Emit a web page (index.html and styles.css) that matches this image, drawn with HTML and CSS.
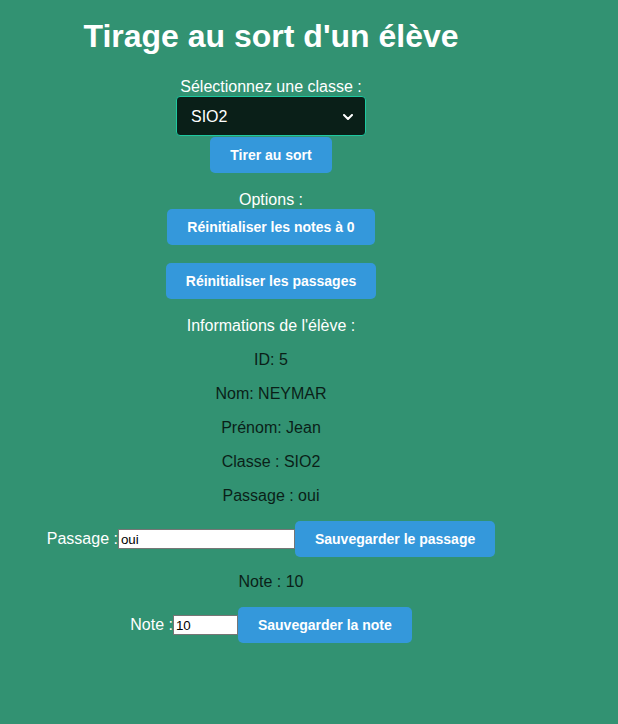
FILE: index.html
```html
<!DOCTYPE html>
<html lang="fr">
<head>
<meta charset="utf-8">
<title>Tirage au sort d'un élève</title>
<link rel="stylesheet" href="styles.css">
</head>
<body>
<div class="container">
  <h1 class="title">Tirage au sort d'un élève</h1>
  <label class="label text" for="classe">Sélectionnez une classe :</label>
  <div class="select-wrap">
    <select id="classe" class="select">
      <option>SIO2</option>
    </select>
    <svg class="chevron" width="10" height="6" viewBox="0 0 10 6"><path d="M1 1 L5 5 L9 1" fill="none" stroke="#fff" stroke-width="2" stroke-linecap="round" stroke-linejoin="round"/></svg>
  </div>
  <button class="btn btn-draw">Tirer au sort</button>
  <div class="label text options">Options :</div>
  <button class="btn btn-first">Réinitialiser les notes à 0</button>
  <button class="btn btn-second">Réinitialiser les passages</button>
  <div class="label text info-title">Informations de l'élève :</div>
  <p class="info text">ID: 5</p>
  <p class="info text">Nom: NEYMAR</p>
  <p class="info text">Prénom: Jean</p>
  <p class="info text">Classe : SIO2</p>
  <p class="info text">Passage : oui</p>
  <div class="row row-passage">
    <label class="label" for="passage">Passage :</label>
    <input id="passage" class="input input-passage" type="text" value="oui">
    <button class="btn">Sauvegarder le passage</button>
  </div>
  <p class="info text note-line">Note : 10</p>
  <div class="row row-note">
    <label class="label" for="note">Note :</label>
    <input id="note" class="input input-note" type="text" value="10">
    <button class="btn">Sauvegarder la note</button>
  </div>
</div>
</body>
</html>
```
FILE: styles.css
```css
html, body {
  margin: 0;
  padding: 0;
}
body {
  background: #329272;
  font-family: "Liberation Sans", Arial, sans-serif;
  font-size: 16px;
  color: #fff;
  min-height: 724px;
}
.container {
  width: 542px;
  display: flex;
  flex-direction: column;
  align-items: center;
}
.title {
  font-size: 32px;
  font-weight: bold;
  margin: 18px 0 22px;
  line-height: 37px;
  color: #fff;
}
.label {
  color: #fff;
  line-height: 18px;
  display: block;
}
.text {
  padding-top: 1px;
  margin-bottom: -1px;
}
.select-wrap {
  position: relative;
  margin-top: 1px;
}
.select {
  appearance: none;
  -webkit-appearance: none;
  display: block;
  width: 190px;
  height: 40px;
  box-sizing: border-box;
  background: #0a1f18;
  color: #fff;
  border: 1px solid #1ec9a0;
  border-radius: 4px;
  font-family: "Liberation Sans", Arial, sans-serif;
  font-size: 16px;
  padding: 0 14px;
}
.chevron {
  position: absolute;
  right: 13px;
  top: 18px;
  pointer-events: none;
}
.btn {
  background: #3498db;
  color: #fff;
  border: none;
  border-radius: 5px;
  font-family: "Liberation Sans", Arial, sans-serif;
  font-size: 14px;
  font-weight: bold;
  line-height: 16px;
  padding: 10px 20px;
}
.btn-draw {
  margin-top: 1px;
}
.options {
  margin-top: 17px;
}
.btn-first {
  margin-top: 1px;
}
.btn-second {
  margin-top: 18px;
}
.info-title {
  margin-top: 17px;
}
.info {
  color: #0a1f18;
  line-height: 18px;
  margin-top: 16px;
}
.row {
  display: flex;
  align-items: center;
}
.row-passage {
  margin-top: 17px;
}
.note-line {
  margin-top: 15px;
}
.row-note {
  margin-top: 17px;
}
.input {
  box-sizing: border-box;
  height: 20px;
  border: 1px solid #767676;
  padding: 0 2px;
  font-family: "Liberation Sans", Arial, sans-serif;
  font-size: 13.33px;
  color: #000;
  background: #fff;
  margin: 0;
}
.input-passage {
  width: 177px;
}
.input-note {
  width: 65px;
}
```
